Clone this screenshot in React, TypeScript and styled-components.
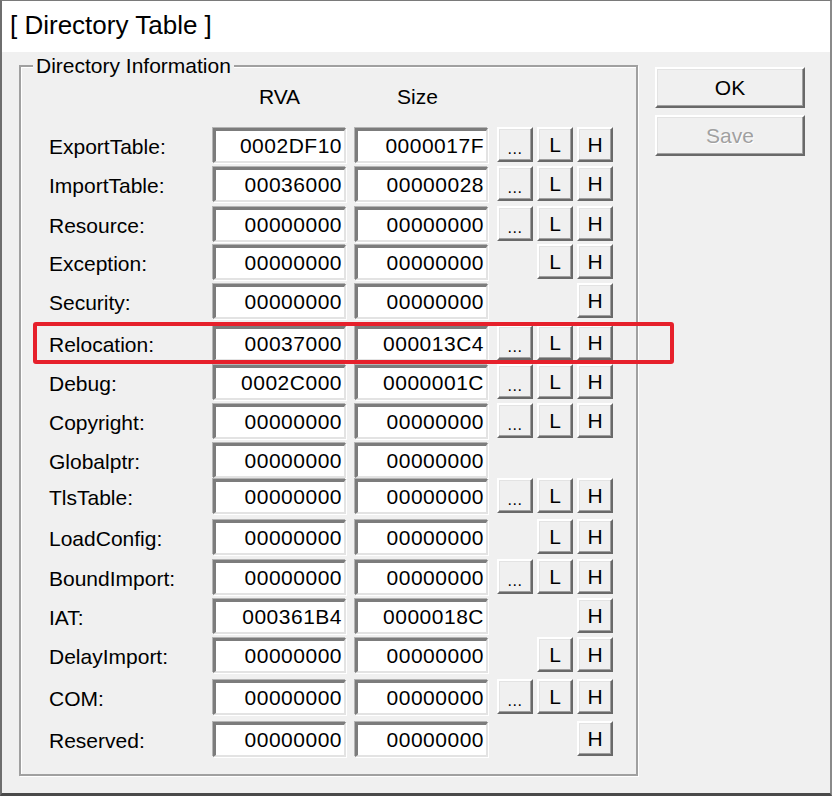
import React from "react";
import styled, { createGlobalStyle } from "styled-components";

const Global = createGlobalStyle`
  html, body { margin: 0; padding: 0; background: #f0f0f0; }
  body { font-family: "Liberation Sans", Arial, sans-serif; }
  * { box-sizing: border-box; }
`;

const Window = styled.div`
  position: relative;
  width: 832px;
  height: 796px;
  display: flex;
  flex-direction: column;
  border-top: 1px solid #7a7a7a;
  border-left: 2px solid #6e6e6e;
  border-right: 2px solid #8a8a8a;
  border-bottom: 3px solid #4a4a4a;
  background: #f0f0f0;
`;

const TitleBar = styled.div`
  height: 51px;
  flex: none;
  background: #ffffff;
  display: flex;
  align-items: center;
  padding-left: 8px;
  padding-bottom: 2px;
  font-size: 26px;
  color: #000;
`;

const Body = styled.div`
  flex: 1;
  display: flex;
  align-items: flex-start;
  gap: 17px;
  padding: 13px 0 0 17px;
  font-size: 21px;
  color: #000;
`;

const GroupBox = styled.div`
  position: relative;
  width: 619px;
  border: 2px solid #a0a0a0;
  box-shadow: inset 1px 1px 0 #ffffff, 1px 1px 0 #ffffff;
  padding: 18px 0 17px 28px;
`;

const Legend = styled.div`
  position: absolute;
  left: 12px;
  top: -13px;
  padding: 0 3px;
  background: #f0f0f0;
  line-height: 24px;
`;

const Grid = styled.div`
  display: grid;
  grid-template-columns: 155px 133px 133px 122px;
  column-gap: 9px;
  align-items: center;
`;

const HeaderRow = styled(Grid)`
  height: 24px;
  margin-bottom: 19px;
`;

const HeaderCell = styled.div<{ $col: number; $shift?: number }>`
  grid-column: ${(p) => p.$col};
  text-align: center;
  line-height: 24px;
  transform: translateX(${(p) => p.$shift ?? 0}px);
`;

const Row = styled(Grid)<{ $gap: number }>`
  height: 35px;
  margin-top: ${(p) => p.$gap}px;
`;

const Label = styled.div`
  line-height: 24px;
  padding-top: 3px;
  white-space: nowrap;
`;

const Edit = styled.div`
  height: 35px;
  background: #ffffff;
  border-top: 3px solid #7c7c7c;
  border-left: 3px solid #7c7c7c;
  border-right: 2px solid #e3e3e3;
  border-bottom: 2px solid #e3e3e3;
  box-shadow: 1px 1px 0 #ffffff, -1px -1px 0 #b4b4b4;
  text-align: right;
  padding-right: 2px;
  font-size: 21px;
  letter-spacing: 0.5px;
  line-height: 30px;
  white-space: nowrap;
`;

const ButtonSlots = styled.div`
  display: grid;
  grid-template-columns: repeat(3, 36px);
  column-gap: 4px;
  height: 35px;
  transform: translateY(-1px);
`;

const RaisedButton = styled.div<{ $col?: number; $disabled?: boolean }>`
  grid-column: ${(p) => p.$col ?? "auto"};
  display: flex;
  align-items: center;
  justify-content: center;
  background: #f0f0f0;
  border-top: 2px solid #ffffff;
  border-left: 2px solid #ffffff;
  border-right: 2px solid #696969;
  border-bottom: 2px solid #696969;
  box-shadow: inset -1px -1px 0 #a0a0a0, inset 1px 1px 0 #e3e3e3;
  color: ${(p) => (p.$disabled ? "#a0a0a0" : "#000")};
  text-shadow: ${(p) => (p.$disabled ? "1px 1px 0 #ffffff" : "none")};
  font-size: 21px;
  line-height: 1;
`;

const SmallButton = styled(RaisedButton)`
  height: 35px;
`;

const Dots = styled.span`
  font-size: 16px;
  padding-top: 8px;
  letter-spacing: 0.5px;
`;

const SideColumn = styled.div`
  display: flex;
  flex-direction: column;
  gap: 7px;
  margin-top: 2px;
`;

const DialogButton = styled(RaisedButton)`
  width: 150px;
  height: 41px;
`;

const Highlight = styled.div`
  position: absolute;
  left: 31px;
  top: 321px;
  width: 641px;
  height: 42px;
  border: 4px solid #e6202b;
  border-radius: 3px;
  pointer-events: none;
`;

type Entry = {
  name: string;
  rva: string;
  size: string;
  btns: ("d" | "L" | "H")[];
  gap: number;
};

const Z = "00000000";
const ALL: ("d" | "L" | "H")[] = ["d", "L", "H"];

const entries: Entry[] = [
  { name: "ExportTable:", rva: "0002DF10", size: "0000017F", btns: ALL, gap: 0 },
  { name: "ImportTable:", rva: "00036000", size: "00000028", btns: ALL, gap: 4 },
  { name: "Resource:", rva: Z, size: Z, btns: ALL, gap: 5 },
  { name: "Exception:", rva: Z, size: Z, btns: ["L", "H"], gap: 3 },
  { name: "Security:", rva: Z, size: Z, btns: ["H"], gap: 4 },
  { name: "Relocation:", rva: "00037000", size: "000013C4", btns: ALL, gap: 7 },
  { name: "Debug:", rva: "0002C000", size: "0000001C", btns: ALL, gap: 4 },
  { name: "Copyright:", rva: Z, size: Z, btns: ALL, gap: 4 },
  { name: "Globalptr:", rva: Z, size: Z, btns: [], gap: 4 },
  { name: "TlsTable:", rva: Z, size: Z, btns: ALL, gap: 1 },
  { name: "LoadConfig:", rva: Z, size: Z, btns: ["L", "H"], gap: 6 },
  { name: "BoundImport:", rva: Z, size: Z, btns: ALL, gap: 5 },
  { name: "IAT:", rva: "000361B4", size: "0000018C", btns: ["H"], gap: 4 },
  { name: "DelayImport:", rva: Z, size: Z, btns: ["L", "H"], gap: 4 },
  { name: "COM:", rva: Z, size: Z, btns: ALL, gap: 7 },
  { name: "Reserved:", rva: Z, size: Z, btns: ["H"], gap: 7 },
];

const colOf = { d: 1, L: 2, H: 3 } as const;

export default function App() {
  return (
    <>
      <Global />
      <Window>
        <TitleBar>[ Directory Table ]</TitleBar>
        <Body>
          <GroupBox>
            <Legend>Directory Information</Legend>
            <HeaderRow>
              <HeaderCell $col={2}>RVA</HeaderCell>
              <HeaderCell $col={3} $shift={-4}>Size</HeaderCell>
            </HeaderRow>
            {entries.map((e) => (
              <Row key={e.name} $gap={e.gap}>
                <Label>{e.name}</Label>
                <Edit>{e.rva}</Edit>
                <Edit>{e.size}</Edit>
                <ButtonSlots>
                  {e.btns.map((b) => (
                    <SmallButton key={b} $col={colOf[b]}>
                      {b === "d" ? <Dots>...</Dots> : b}
                    </SmallButton>
                  ))}
                </ButtonSlots>
              </Row>
            ))}
          </GroupBox>
          <SideColumn>
            <DialogButton>OK</DialogButton>
            <DialogButton $disabled>Save</DialogButton>
          </SideColumn>
        </Body>
        <Highlight />
      </Window>
    </>
  );
}
